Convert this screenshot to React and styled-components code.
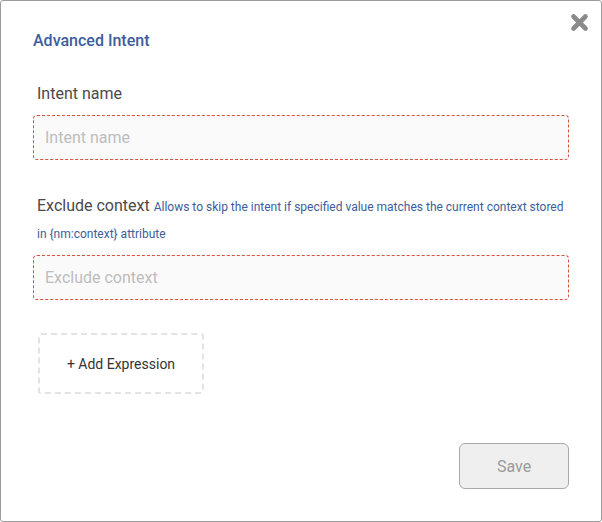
import React from "react";
import styled, { createGlobalStyle } from "styled-components";

const Global = createGlobalStyle`
  html, body { margin: 0; padding: 0; background: #fff; }
  body { font-family: Roboto, "Noto Sans", "Liberation Sans", sans-serif; }
  * { box-sizing: border-box; }
`;

const Dialog = styled.div`
  position: relative;
  width: 602px;
  height: 522px;
  border: 1px solid #9b9b9b;
  border-radius: 3px;
  background: #fff;
  padding: 30px 32px 0 32px;
  display: flex;
  flex-direction: column;
`;

const Title = styled.h2`
  margin: 0;
  font-size: 16px;
  line-height: 20px;
  font-weight: 500;
  color: #3d5d9c;
`;

const Close = styled.button`
  position: absolute;
  top: 12px;
  right: 12px;
  width: 19px;
  height: 19px;
  padding: 0;
  border: 0;
  background: transparent;
  cursor: pointer;
  display: flex;
`;

const Field = styled.div`
  margin-top: ${(p) => p.$gap}px;
  display: flex;
  flex-direction: column;
`;

const Label = styled.label`
  padding-left: 4px;
  font-size: 16px;
  line-height: 27px;
  color: #4a4a4a;
`;

const Hint = styled.span`
  font-size: 12px;
  line-height: 14px;
  color: #3d5d9c;
`;

const Input = styled.input`
  margin-top: ${(p) => p.$gap}px;
  width: 100%;
  height: 45px;
  border: 1px dashed #d5523f;
  border-radius: 4px;
  background: #fafafa;
  padding: 0 11px;
  font-family: inherit;
  font-size: 16px;
  color: #333;
  outline: none;
  &::placeholder { color: #bdbdbd; }
`;

const AddBox = styled.button`
  margin: 33px 0 0 5px;
  width: 166px;
  height: 61px;
  border: 2px dashed #e3e3e3;
  border-radius: 3px;
  background: #fff;
  font-family: inherit;
  font-size: 14px;
  color: #333;
  cursor: pointer;
`;

const Footer = styled.div`
  margin-top: 49px;
  display: flex;
  justify-content: flex-end;
  padding-right: 0;
`;

const SaveButton = styled.button`
  width: 110px;
  height: 46px;
  border: 1px solid #a8a8a8;
  border-radius: 6px;
  background: #efefef;
  font-family: inherit;
  font-size: 16px;
  color: #9a9a9a;
`;

export default function App() {
  return (
    <>
      <Global />
      <Dialog>
        <Close aria-label="Close">
          <svg width="19" height="19" viewBox="0 0 19 19">
            <path d="M3.5 3.5 L15.5 15.5 M15.5 3.5 L3.5 15.5" stroke="#8a8a8a" strokeWidth="4.6" strokeLinecap="round" />
          </svg>
        </Close>
        <Title>Advanced Intent</Title>
        <Field $gap={29}>
          <Label>Intent name</Label>
          <Input $gap={8} placeholder="Intent name" />
        </Field>
        <Field $gap={32}>
          <Label>
            Exclude context{" "}
            <Hint>Allows to skip the intent if specified value matches the current context stored in {"{nm:context}"} attribute</Hint>
          </Label>
          <Input $gap={9} placeholder="Exclude context" />
        </Field>
        <div>
          <AddBox>+ Add Expression</AddBox>
        </div>
        <Footer>
          <SaveButton disabled>Save</SaveButton>
        </Footer>
      </Dialog>
    </>
  );
}
